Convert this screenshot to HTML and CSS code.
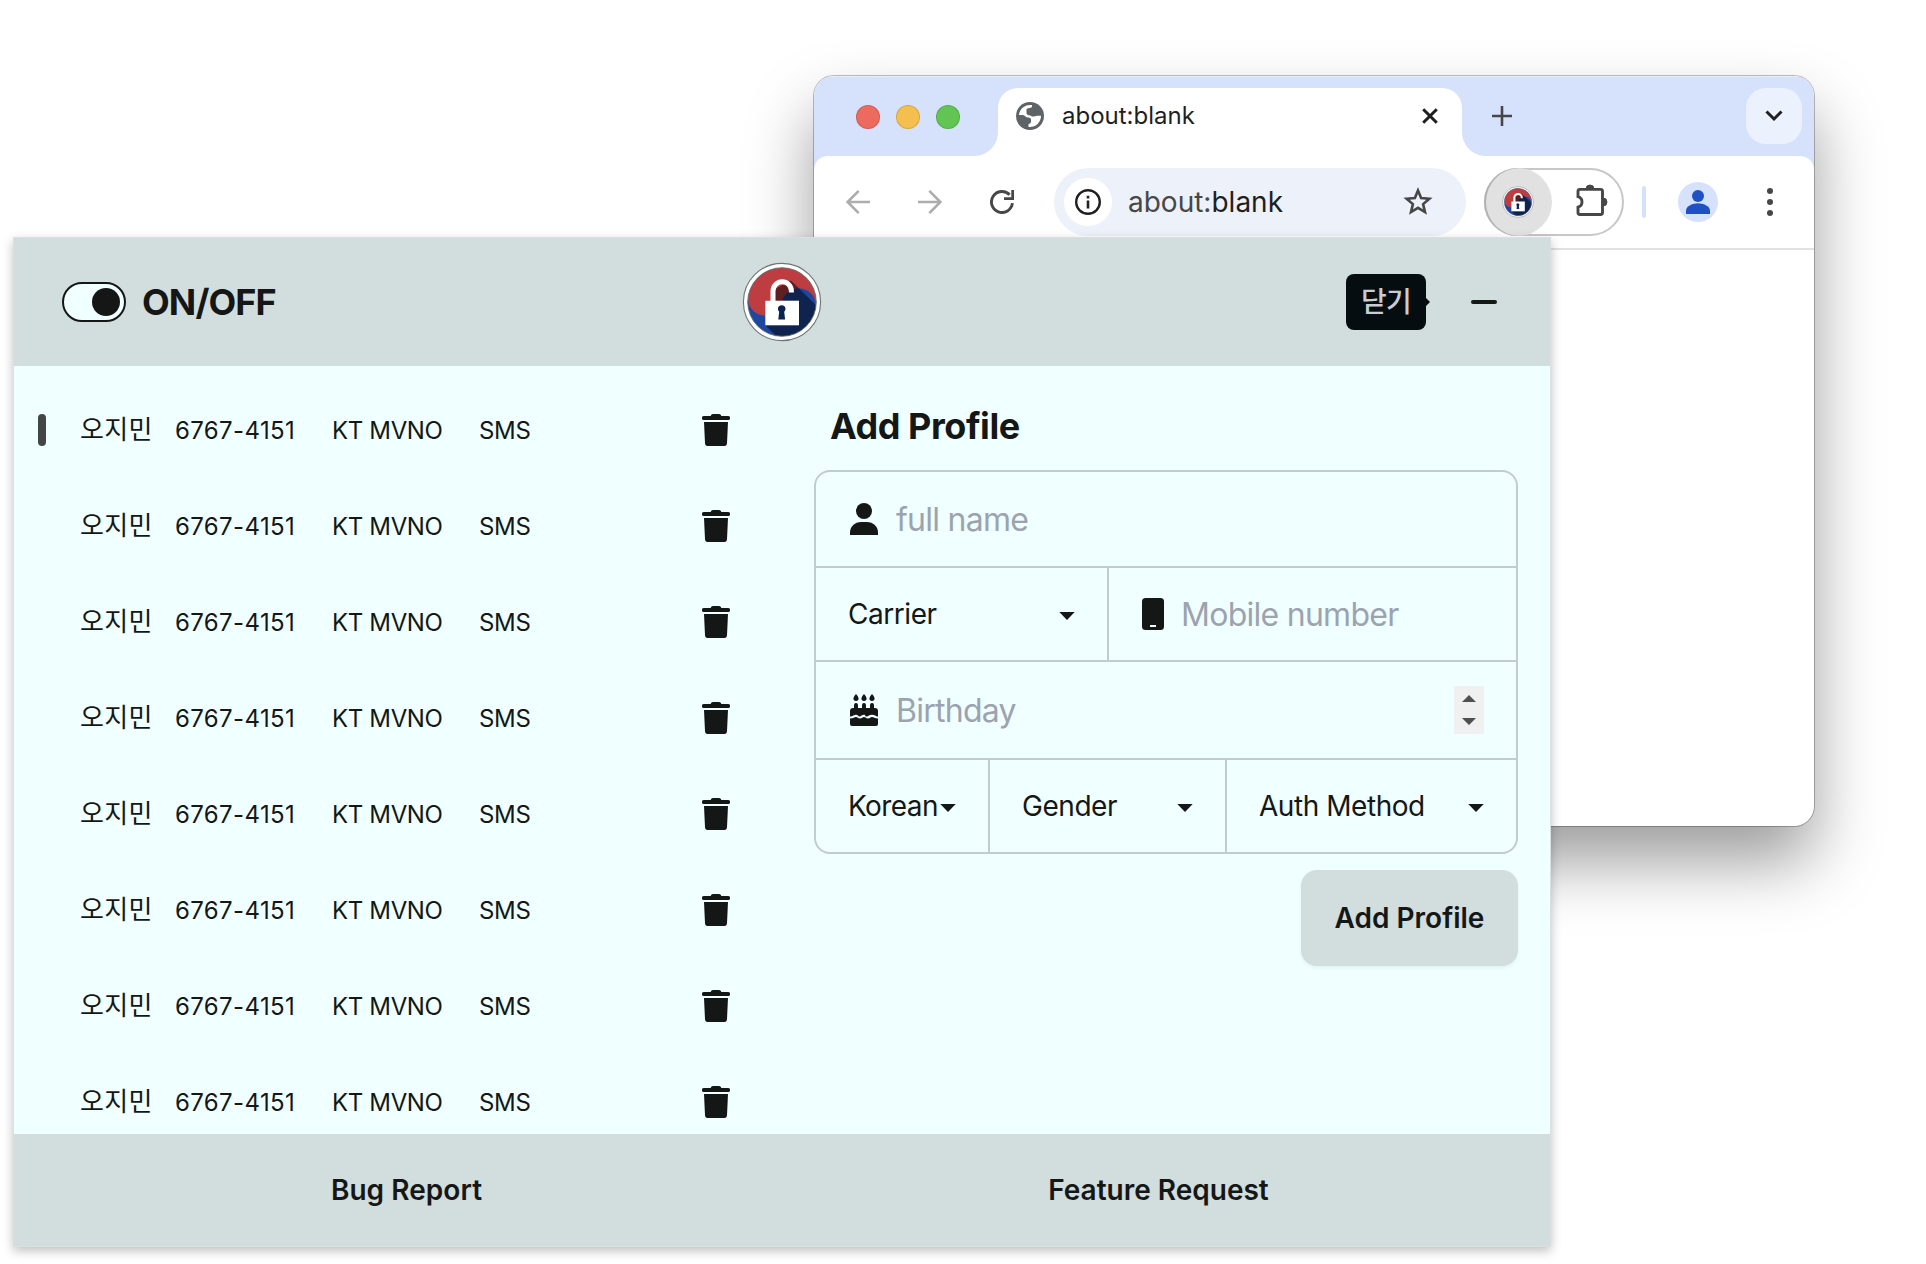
FILE: index.html
```html
<!DOCTYPE html>
<html lang="ko">
<head>
<meta charset="utf-8">
<title>Profiles</title>
<link rel="stylesheet" href="styles.css">
</head>
<body>
<svg class="defs" width="0" height="0" aria-hidden="true">
  <defs>
    <clipPath id="disc"><circle cx="40" cy="40" r="34.3"/></clipPath>
    <symbol id="logo" viewBox="0 0 80 80">
      <circle cx="40" cy="40" r="38.6" fill="#fff" stroke="#6f7676" stroke-width="1.1"/>
      <g clip-path="url(#disc)">
        <rect width="80" height="80" fill="#1e479f"/>
        <path d="M6.4 33A34.3 34.3 0 0 1 73.6 47A17.15 17.15 0 0 0 40 40A17.15 17.15 0 0 1 6.4 33Z" fill="#be3d41"/>
        <path d="M49 18.500L95 64V110H70L23.3 63.3V38.7H33V27Z" fill="#000" opacity=".5"/>
      </g>
      <circle cx="40" cy="40" r="34.3" fill="none" stroke="#6f7676" stroke-width=".9"/>
      <path d="M31 40V29a9.2 9.2 0 0 1 18.4 0v1.5" fill="none" stroke="#fff" stroke-width="5"/>
      <rect x="23.3" y="38.7" width="33.7" height="24.6" fill="#fff"/>
      <path d="M37.200 49.800a3.800 3.800 0 1 1 5 0l.9 7.600h-6.800z" fill="#0b2352"/>
    </symbol>
    <symbol id="trash" viewBox="0 0 28 32">
      <path d="M1.500 2H8.500L9.500.6Q10 0 11 0H17Q18 0 18.500.6L19.500 2H26.500Q28 2 28 3.500V4.500Q28 6 26.500 6H1.500Q0 6 0 4.500V3.500Q0 2 1.500 2ZM2 8H26L25 29.200Q24.800 32 22 32H6Q3.200 32 3 29.200Z"/>
    </symbol>
    <symbol id="caret" viewBox="0 0 16 8"><path d="M.3 0H15.700L8 8Z"/></symbol>
  </defs>
</svg>

<div class="desktop">
  <section class="browser">
    <div class="tabstrip">
      <div class="lights"><i class="light red"></i><i class="light amber"></i><i class="light green"></i></div>
      <div class="tab">
        <svg class="globe" viewBox="-14 -14 28 28"><circle r="14" fill="#5f6368"/><path d="M-11 -1A11 11 0 0 1 2-10.900C2.500-9 1.500-8-.5-8C-3-8-4-7-3.500-5V-3.500C-3.500-1.500-2.500-1-1-.8C1-.5 1.500.5 3 .6C4.500.7 5.500-.3 7-.3H11A11 11 0 0 1-1.500 10.900V8C0 7.800 1 7.200 1 5.500V3.500C1 2-.5 1.500-2.500 1.500C-4.500 1.500-5-.8-7-.9Z" fill="#fff"/></svg>
        <span class="tab-title">about:blank</span>
        <svg class="close" viewBox="0 0 16 16"><path d="M1.200 1.200L14.800 14.800M14.800 1.200L1.200 14.800"/></svg>
      </div>
      <svg class="plus" viewBox="0 0 20 20"><path d="M10 0V20M0 10H20"/></svg>
      <div class="tab-menu"><svg width="18" height="12" viewBox="0 0 18 12"><path d="M1.500 1.500L9 9L16.500 1.500"/></svg></div>
    </div>
    <div class="toolbar">
      <svg class="nav" viewBox="0 0 24 24"><path d="M24 12H2M12.700.9L1.600 12L12.700 23.100"/></svg>
      <svg class="nav" viewBox="0 0 24 24"><path d="M0 12H22M11.300.9L22.400 12L11.300 23.100"/></svg>
      <svg class="reload" viewBox="0 0 24 24"><path d="M22.400 13.200A10.500 10.500 0 1 1 19.600 4.800" fill="none" stroke="#474747" stroke-width="2.900"/><path d="M21.300 0H24V10H14V7.200H21.300Z" fill="#474747"/></svg>
      <div class="omnibox">
        <span class="info"><svg width="26" height="26" viewBox="0 0 26 26"><circle cx="13" cy="13" r="11.800" fill="none" stroke="#1f1f1f" stroke-width="2.400"/><path d="M11.700 11.500h2.600v8h-2.600zM11.700 6.800h2.600v2.600h-2.600z" fill="#1f1f1f"/></svg></span>
        <span class="url"><span class="scheme">about:</span>blank</span>
        <svg class="star" viewBox="0 0 30 30"><path d="M15 3.500L18.100 11L26.400 11.700L20.100 17.100L22 25.100L15 20.800L8 25.100L9.900 17.100L3.600 11.700L11.900 11Z"/></svg>
      </div>
      <div class="extensions">
        <span class="ext-active"><svg width="32" height="32"><use href="#logo"/></svg></span>
        <svg class="puzzle" viewBox="0 0 32 32"><path d="M4 5.400H24.500Q26.500 5.400 26.500 7.400V28.500Q26.500 30.500 24.500 30.500H4Q2 30.500 2 28.500V23.200Q6 22 6 18Q6 14 2 12.700V7.400Q2 5.400 4 5.400Z" fill="none" stroke="#474747" stroke-width="2.900"/><path d="M10 5a4 4 0 0 1 8 0zM27 14a4 4 0 0 1 0 8z" fill="#474747" stroke="#474747"/></svg>
      </div>
      <i class="divider"></i>
      <span class="avatar"><svg width="24" height="24" viewBox="0 0 24 24"><circle cx="12" cy="6" r="6"/><path d="M0 24V20.500C0 16 7 13.200 12 13.200S24 16 24 20.500V24Z"/></svg></span>
      <span class="dots"><i></i><i></i><i></i></span>
    </div>
  </section>

  <main class="popup">
    <header class="head">
      <div class="switch"><i></i></div>
      <span class="switch-label">ON/OFF</span>
      <svg class="brand" width="80" height="80"><use href="#logo"/></svg>
      <div class="tip">닫기</div>
      <i class="minus"></i>
    </header>
    <div class="body">
      <ul class="list">
        <li class="row active"><i class="mark"></i><span class="name">오지민</span><span class="num">6767-4151</span><span class="kt">KT MVNO</span><span class="sms">SMS</span><svg class="bin"><use href="#trash"/></svg></li>
        <li class="row"><i class="mark"></i><span class="name">오지민</span><span class="num">6767-4151</span><span class="kt">KT MVNO</span><span class="sms">SMS</span><svg class="bin"><use href="#trash"/></svg></li>
        <li class="row"><i class="mark"></i><span class="name">오지민</span><span class="num">6767-4151</span><span class="kt">KT MVNO</span><span class="sms">SMS</span><svg class="bin"><use href="#trash"/></svg></li>
        <li class="row"><i class="mark"></i><span class="name">오지민</span><span class="num">6767-4151</span><span class="kt">KT MVNO</span><span class="sms">SMS</span><svg class="bin"><use href="#trash"/></svg></li>
        <li class="row"><i class="mark"></i><span class="name">오지민</span><span class="num">6767-4151</span><span class="kt">KT MVNO</span><span class="sms">SMS</span><svg class="bin"><use href="#trash"/></svg></li>
        <li class="row"><i class="mark"></i><span class="name">오지민</span><span class="num">6767-4151</span><span class="kt">KT MVNO</span><span class="sms">SMS</span><svg class="bin"><use href="#trash"/></svg></li>
        <li class="row"><i class="mark"></i><span class="name">오지민</span><span class="num">6767-4151</span><span class="kt">KT MVNO</span><span class="sms">SMS</span><svg class="bin"><use href="#trash"/></svg></li>
        <li class="row"><i class="mark"></i><span class="name">오지민</span><span class="num">6767-4151</span><span class="kt">KT MVNO</span><span class="sms">SMS</span><svg class="bin"><use href="#trash"/></svg></li>
      </ul>
      <section class="editor">
        <h2>Add Profile</h2>
        <div class="form">
          <div class="line l1"><div class="field">
            <svg width="28" height="32" viewBox="0 0 28 32"><circle cx="14" cy="8" r="8"/><path d="M0 32V29.500C0 23.500 5 19 11 19H17C23 19 28 23.500 28 29.500V32Z"/></svg>
            <span class="ph">full name</span></div></div>
          <div class="line l2">
            <div class="pick carrier"><span>Carrier</span><svg class="caret"><use href="#caret"/></svg></div>
            <div class="field phone"><svg width="22" height="32" viewBox="0 0 22 32"><rect width="22" height="32" rx="3.500"/><rect x="8" y="27" width="6" height="2" fill="#f0ffff"/></svg>
            <span class="ph">Mobile number</span></div>
          </div>
          <div class="line l3"><div class="field">
            <svg width="28" height="32" viewBox="0 0 28 32"><path d="M6 0Q8.600 2.600 8.600 4.300A2.600 2.600 0 0 1 3.400 4.300Q3.400 2.600 6 0ZM14 0Q16.600 2.600 16.600 4.300A2.600 2.600 0 0 1 11.400 4.300Q11.400 2.600 14 0ZM22 0Q24.600 2.600 24.600 4.300A2.600 2.600 0 0 1 19.400 4.300Q19.400 2.600 22 0ZM4 14V11Q4 9 6 9T8 11V14H12V11Q12 9 14 9T16 11V14H20V11Q20 9 22 9T24 11V14H25Q28 14 28 17V22.500C25.500 22.500 25 20.800 22 20.800S18.500 22.500 16.500 22.500S16 20.800 14 20.800S11 22.500 9.500 22.500S8 20.800 6 20.800S3 22.500 0 22.500V17Q0 14 3 14H4ZM0 24.500C3.500 24.500 4.500 22.900 6 22.900S8 24.500 10 24.500S12.500 22.900 14 22.900S16 24.500 18 24.500S20.500 22.900 22 22.900S25 24.500 28 24.500V30Q28 32 26 32H2Q0 32 0 30Z"/></svg>
            <span class="ph">Birthday</span>
            <svg class="spin" width="30" height="48" viewBox="0 0 30 48"><rect width="30" height="48" fill="#f0f0f0"/><path d="M8 16H22L15 9ZM8 32H22L15 39Z" fill="#505050"/></svg></div></div>
          <div class="line l4">
            <div class="pick nation"><span>Korean</span><svg class="caret"><use href="#caret"/></svg></div>
            <div class="pick gender"><span>Gender</span><svg class="caret"><use href="#caret"/></svg></div>
            <div class="pick auth"><span>Auth Method</span><svg class="caret"><use href="#caret"/></svg></div>
          </div>
        </div>
        <button class="add">Add Profile</button>
      </section>
    </div>
    <footer class="foot"><a class="bug">Bug Report</a><a class="feature">Feature Request</a></footer>
  </main>
</div>
</body>
</html>
```
FILE: styles.css
```css
* { box-sizing: border-box; }
body { margin: 0; background: #fff; color: #151716; font-family: Inter, "Noto Sans CJK KR", sans-serif; }
i { display: block; }
svg { display: block; flex: none; }
.defs { position: absolute; }
.desktop { position: relative; width: 1926px; height: 1264px; overflow: hidden; }

/* Browser window */
.browser {
  position: absolute; left: 814px; top: 76px; width: 1000px; height: 750px;
  border-radius: 20px; background: #fff; overflow: hidden;
  box-shadow: 0 0 0 1px rgba(0,0,0,.25), 0 36px 66px rgba(0,0,0,.39);
}
.tabstrip { display: flex; align-items: center; height: 80px; background: #d6e1fc; padding-right: 12px; border-top: 1px solid #e7eefd; }
.lights { display: flex; gap: 16px; padding-left: 42px; width: 184px; margin-top: 1px; }
.light { width: 24px; height: 24px; border-radius: 50%; border: 1px solid rgba(0,0,0,.13); }
.red { background: #ed6a5e; }
.amber { background: #f5bf4f; }
.green { background: #61c554; }
.tab {
  position: relative; display: flex; align-items: center; align-self: flex-end;
  width: 464px; height: 68px; padding: 0 24px 12px 18px; background: #fff; border-radius: 20px 20px 0 0;
}
.tab::before, .tab::after { content: ""; position: absolute; bottom: 0; width: 24px; height: 24px; }
.tab::before { left: -24px; background: radial-gradient(circle at 0 0, transparent 23.500px, #fff 24.500px); }
.tab::after { right: -24px; background: radial-gradient(circle at 100% 0, transparent 23.500px, #fff 24.500px); }
.globe { width: 28px; height: 28px; }
.tab-title { margin-left: 18px; font-size: 24px; line-height: 32px; color: #1f1f1f; }
.close { width: 16px; height: 16px; margin-left: auto; fill: none; stroke: #1f1f1f; stroke-width: 3; }
.plus { width: 20px; height: 20px; margin: 0 0 1px 30px; stroke: #474747; stroke-width: 2.600; }
.tab-menu { display: grid; place-items: center; width: 56px; height: 56px; margin: 0 0 1px auto; border-radius: 20px; background: #ebf2fd; }
.tab-menu svg { fill: none; stroke: #1f1f1f; stroke-width: 3; }
.toolbar {
  position: relative; display: flex; align-items: center; height: 94px; padding: 0 0 0 32px;
  border-bottom: 2px solid #e1e1e1; background: #fff;
}
.toolbar::before, .toolbar::after { content: ""; position: absolute; top: 0; width: 14px; height: 14px; }
.toolbar::before { left: 0; background: radial-gradient(circle at 100% 100%, transparent 13.500px, #d6e1fc 14.500px); }
.toolbar::after { right: 0; background: radial-gradient(circle at 0 100%, transparent 13.500px, #d6e1fc 14.500px); }
.nav { width: 24px; height: 24px; margin-right: 48px; fill: none; stroke: #adadad; stroke-width: 2.600; }
.reload { width: 24px; height: 24px; }
.omnibox { display: flex; align-items: center; width: 412px; height: 68px; margin-left: 40px; padding: 0 33px 0 10px; border-radius: 34px; background: #edf2fa; }
.info { display: grid; place-items: center; width: 48px; height: 48px; border-radius: 50%; background: #fff; }
.url { margin-left: 16px; font-size: 28px; line-height: 36px; color: #1f1f1f; }
.scheme { color: #474747; }
.star { width: 30px; height: 30px; margin-left: auto; fill: none; stroke: #474747; stroke-width: 2.600; }
.extensions { display: flex; align-items: center; width: 140px; height: 68px; margin-left: 18px; border: 2px solid #c7c7c7; border-radius: 34px; }
.ext-active { display: grid; place-items: center; flex: none; width: 68px; height: 68px; margin-left: -2px; border-radius: 50%; background: #e1e1e1; box-shadow: inset 2px 0 0 #b2b2b2; }
.puzzle { width: 32px; height: 32px; margin-left: 24px; margin-top: -4px; }
.divider { width: 4px; height: 32px; margin-left: 18px; border-radius: 2px; background: #d6e1fc; }
.avatar { display: grid; place-items: center; width: 40px; height: 40px; margin-left: 32px; border-radius: 50%; background: #d6e1fc; }
.avatar svg { fill: #1f51c4; }
.dots { display: grid; gap: 5px; margin-left: 49px; }
.dots i { width: 6px; height: 6px; border-radius: 50%; background: #474747; }

/* Extension popup */
.popup {
  position: absolute; left: 14px; top: 238px; width: 1536px; height: 1008px;
  background: #f0ffff; box-shadow: 0 0 0 1px #dcdfdf, 0 4px 10px 1px rgba(0,0,0,.25);
}
.head { display: flex; align-items: center; height: 128px; padding: 0 53px 0 48px; background: #d2ddde; }
.switch { width: 64px; height: 40px; padding: 4px; border: 2px solid #151716; border-radius: 20px; background: #f0ffff; }
.switch i { width: 28px; height: 28px; margin-left: auto; border-radius: 50%; background: #151716; }
.switch-label { width: 140px; margin-left: 16px; font-size: 36px; line-height: 40px; font-weight: 700; letter-spacing: -.9px; }
.brand { margin-left: 459.500px; }
.tip {
  position: relative; margin-left: auto; width: 80px; height: 56px; border-radius: 8px; background: #060d10; color: #c9ccd2;
  font-size: 28px; font-weight: 500; line-height: 56px; letter-spacing: -.8px; text-align: center;
}
.tip::after { content: ""; position: absolute; left: 80px; top: 24px; border: 4px solid transparent; border-left-color: #060d10; border-right: 0; }
.minus { width: 26px; height: 4px; margin-left: 45px; border-radius: 2px; background: #151716; }

.body { display: flex; height: 768px; overflow: hidden; }
.list { flex: none; width: 800px; margin: 0; padding: 16px 0 0 24px; list-style: none; }
.row { display: grid; grid-template-columns: 42px 95px 157px 147px 223px 28px; align-items: center; height: 96px; font-size: 24px; line-height: 32px; white-space: nowrap; }
.row span { padding-top: 2px; }
.mark { width: 8px; height: 32px; border-radius: 4px; }
.active .mark { background: #424645; }
.row .name { padding-top: 0; font-size: 26px; letter-spacing: .3px; }
.num { letter-spacing: .38px; }
.kt { letter-spacing: -.35px; }
.sms { letter-spacing: -.3px; }
.bin { width: 28px; height: 32px; fill: #151716; }

.editor { width: 704px; padding-top: 40px; }
h2 { margin: 0 0 24px; padding-left: 16px; font-size: 36px; line-height: 40px; font-weight: 700; letter-spacing: -.46px; }
.form { height: 384px; border: 2px solid #c1cdcd; border-radius: 16px; }
.line { display: flex; }
.line + .line { border-top: 2px solid #c1cdcd; }
.l1 { height: 94px; }
.l2 { height: 94px; }
.l3 { height: 98px; }
.l4 { height: 94px; }
.field { display: flex; flex: 1; align-items: center; padding: 0 32px 0 34px; }
.field svg { fill: #151716; }
.ph { margin-left: 18px; padding-top: 2px; font-size: 32px; line-height: 40px; letter-spacing: -.73px; color: #9ca3af; white-space: nowrap; }
.field .spin { margin-left: auto; }
.phone { padding-left: 33px; }
.phone .ph { margin-left: 17px; }
.pick { display: flex; align-items: center; justify-content: space-between; padding: 0 32.500px 0 32px; font-size: 28px; line-height: 40px; letter-spacing: -.45px; white-space: nowrap; }
.pick + * { border-left: 2px solid #c1cdcd; }
.caret { width: 16px; height: 8px; margin-top: 4px; fill: #151716; }
.carrier { width: 291px; }
.nation { width: 172px; letter-spacing: -.6px; }
.gender { width: 237px; }
.auth { flex: 1; }
.add {
  display: block; width: 217px; height: 96px; margin: 16px 0 0 auto; padding: 0; border: 0; border-radius: 16px; background: #d2ddde;
  box-shadow: 0 2px 4px rgba(0,0,0,.06); color: #151716; font: 600 28px/40px Inter, sans-serif;
}
.foot { display: flex; height: 112px; padding-right: 32px; background: #d2ddde; font-size: 28px; line-height: 112px; font-weight: 600; text-align: center; }
.bug { width: 785px; letter-spacing: .05px; }
.feature { flex: 1; }
```
